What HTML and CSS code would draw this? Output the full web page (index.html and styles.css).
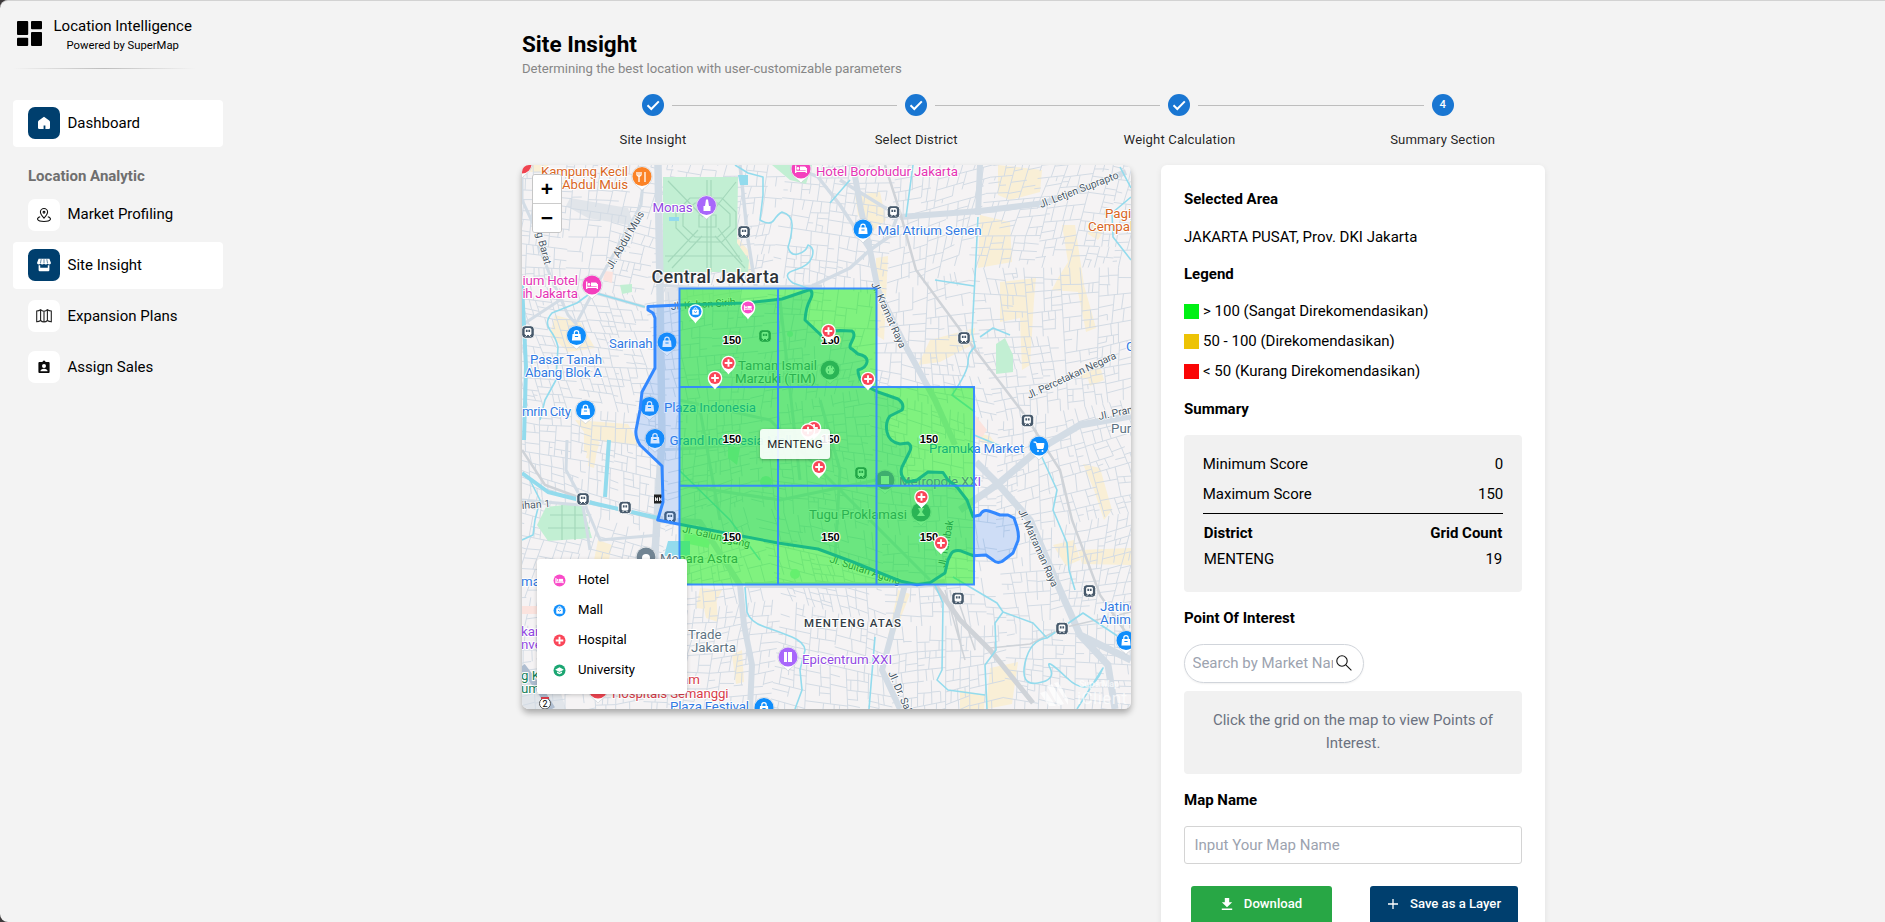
FILE: index.html
```html
<!DOCTYPE html>
<html lang="en">
<head>
<meta charset="utf-8">
<title>Location Intelligence</title>
<link rel="stylesheet" href="styles.css">
</head>
<body>
<div class="app">
  <aside class="sidebar">
    <div class="brand">
      <svg class="brand-logo" viewBox="0 0 25 25"><rect x="0" y="0" width="11.2" height="14" rx="1"/><rect x="14" y="0" width="11" height="8.2" rx="1"/><rect x="0" y="16.8" width="11.2" height="8.2" rx="1"/><rect x="14" y="11" width="11" height="14" rx="1"/></svg>
      <div class="brand-text"><div class="brand-name">Location Intelligence</div><div class="brand-sub">Powered by SuperMap</div></div>
    </div>
    <div class="divider"></div>
    <nav class="nav">
      <a class="nav-item active"><span class="nav-icon"><svg viewBox="0 0 16 16"><path fill="#fff" d="M8 1.8 13.2 5.600 Q14 6.200 14 7V12.800Q14 14 12.800 14H9.400V10.600H7.600V14H3.200Q2 14 2 12.800V7Q2 6.200 2.800 5.600Z"/></svg></span>Dashboard</a>
      <div class="nav-heading">Location Analytic</div>
      <a class="nav-item"><span class="nav-icon"><svg viewBox="0 0 16 16" fill="none" stroke="#111" stroke-width="1.1"><path d="M8 11.2C5.6 8.6 4.4 7 4.4 5.1A3.6 3.6 0 0 1 11.6 5.1C11.6 7 10.400 8.600 8 11.200Z"/><circle cx="8" cy="5.200" r=".9"/><path d="M4.200 9.800C-.2 11 .6 14.500 8 14.500S16.200 11 11.800 9.800"/></svg></span>Market Profiling</a>
      <a class="nav-item active"><span class="nav-icon"><svg viewBox="0 0 16 16" fill="#fff"><path d="M2.600 1.800H13.400L15 6Q14.800 7.400 13.400 7.400T11.600 6.400Q11 7.400 9.800 7.400T8 6.400Q7.400 7.400 6.200 7.400T4.400 6.400Q4 7.400 2.600 7.400T1 6Z"/><path d="M5.200 2.200 4.500 6M8 2.200V6M10.800 2.200 11.500 6" stroke="#003f6e" stroke-width=".6"/><path d="M2.600 8.200H4.200V10.800H11.800V8.200H13.400V13Q13.400 14.200 12.200 14.200H3.800Q2.600 14.200 2.600 13Z"/></svg></span>Site Insight</a>
      <a class="nav-item"><span class="nav-icon"><svg viewBox="0 0 16 16" fill="none" stroke="#222" stroke-width="1.1"><path d="M.7 3Q3 2.800 4.600 1.700Q6 3.200 8 3.200T11.400 1.700Q13 2.900 15.300 3V13.800Q13 13.600 11.400 12.500Q10 14 8 14T4.600 12.500Q3 13.700.7 13.800ZM4.600 1.700V12.500M8 3.200V14M11.400 1.700V12.500"/></svg></span>Expansion Plans</a>
      <a class="nav-item"><span class="nav-icon"><svg viewBox="0 0 16 16"><path fill="#0a0a0a" fill-rule="evenodd" d="M3.400 3H6.500A1.500 1.500 0 0 1 9.500 3H12.600Q13.600 3 13.600 4V13Q13.600 14 12.600 14H3.400Q2.400 14 2.400 13V4Q2.400 3 3.400 3ZM8 4.900A2 2 0 1 0 8 8.900A2 2 0 1 0 8 4.900ZM4.400 12.300H11.600Q11.400 9.800 8 9.800T4.400 12.300Z"/></svg></span>Assign Sales</a>
    </nav>
  </aside>

  <main class="main">
    <h1 class="title">Site Insight</h1>
    <p class="subtitle">Determining the best location with user-customizable parameters</p>
    <ol class="stepper">
      <li class="step"><span class="dot"><svg viewBox="0 0 22 22"><path d="M5.500 11.300 9.300 15 16.800 7.400"/></svg></span><span class="step-label">Site Insight</span></li>
      <li class="step"><span class="dot"><svg viewBox="0 0 22 22"><path d="M5.500 11.300 9.300 15 16.800 7.400"/></svg></span><span class="step-label">Select District</span></li>
      <li class="step"><span class="dot"><svg viewBox="0 0 22 22"><path d="M5.500 11.300 9.300 15 16.800 7.400"/></svg></span><span class="step-label">Weight Calculation</span></li>
      <li class="step"><span class="dot">4</span><span class="step-label">Summary Section</span></li>
    </ol>

    <div class="content">
      <section class="map">
        <svg class="map-canvas" id="map" viewBox="522 165 609 544">
          <defs>
            <g id="bag"><path d="M0 13.800C-2 10.800-10.200 7.800-10.200 0A10.200 10.200 0 0 1 10.200 0C10.200 7.800 2 10.800 0 13.800Z" fill="#fff" stroke="#b9c0c8" stroke-width=".5"/><circle r="9.500" fill="#0f8dfb"/><path d="M-4-1.500H4L4.600 5H-4.600Z" fill="#fff"/><path d="M-2.200-1V-2.600A2.200 2.200 0 0 1 2.200-2.600V-1" fill="none" stroke="#fff" stroke-width="1.200"/><path d="M-1.600 1H1.600" stroke="#0f8dfb"/></g>
            <g id="poi"><path d="M0 13.800C-2 10.800-10.200 7.800-10.200 0A10.200 10.200 0 0 1 10.200 0C10.200 7.800 2 10.800 0 13.800Z" fill="#fff" stroke="#b9c0c8" stroke-width=".5"/><circle r="9.500" fill="currentColor"/></g>
            <g id="bed"><use href="#poi"/><path d="M-5.300-3.500V4M-5.300 2.300H5.300V4M5.300 2V-1" stroke="#fff" stroke-width="1.300" fill="none"/><path d="M-1-2.500H3.600Q5.300-2.500 5.300-.8V1.300H-1Z" fill="#fff"/><circle cx="-3" cy="-.6" r="1.300" fill="#fff"/></g>
            <g id="station"><rect x="-6.300" y="-6.300" width="12.600" height="12.600" rx="3.500" fill="#47596b" stroke="#fff" stroke-width="1"/><rect x="-3.400" y="-4" width="6.800" height="7" rx="1.500" fill="#fff"/><path d="M-2.100-2.300H-.4V0H-2.100ZM.4-2.300H2.100V0H.4Z" fill="#47596b"/><path d="M-2.500 4.600-1 3M2.500 4.600 1 3" stroke="#fff"/></g>
            <g id="hosp"><path d="M0 11.500C-1.500 8.500-7.300 6-7.300 0A7.300 7.300 0 0 1 7.300 0C7.300 6 1.500 8.500 0 11.500Z" fill="#fff"/><circle r="6" fill="#fa4659"/><path d="M0-3.800V3.800M-3.800 0H3.800" stroke="#fff" stroke-width="1.900"/></g>
          </defs>
          <rect x="522" y="165" width="609" height="544" fill="#f5f3f4"/>
          <g fill="#f9efd6">
            <path d="M855 195 880 192 886 220 872 232 858 215ZM998 165 1042 170 1040 192 1010 200 998 195ZM980 215 1010 222 1012 262 978 268ZM1062 225 1075 225 1084 285 1096 328 1086 332 1078 292 1052 290 1058 278 1068 262ZM1000 282 1036 278 1034 300 1030 365 1022 370 1020 318 1000 322ZM930 340 975 328 972 345 940 362 918 365ZM876 258 888 256 884 340 876 335ZM555 315 580 322 595 348 568 352 550 335ZM575 420 628 424 640 445 590 440ZM590 435 598 445 594 468 588 466ZM1083 464 1100 468 1112 510 1104 520 1094 490ZM1053 545 1074 540 1080 560 1066 566ZM1078 550 1131 548 1131 565 1082 564ZM700 588 722 590 712 610 696 608ZM732 655 742 650 744 682 736 684ZM990 668 1018 662 1012 704 986 709ZM598 540 612 545 608 565 594 560ZM898 590 910 594 890 645 884 655ZM960 690 985 695 984 709 960 709ZM1080 370 1096 372 1092 380 1080 378ZM736 236 748 250 752 280 741 268ZM532 165 548 165 545 172 530 172ZM590 440 600 442 594 460 586 458ZM584 430 600 432 596 455 584 452ZM700 590 716 592 718 622 706 618ZM974 432 990 436 1000 450 984 446ZM1090 222 1104 230 1098 240 1088 234ZM1086 372 1100 366 1104 380 1090 386Z"/>
          </g>
          <g fill="#e1e5ea"><path d="M570 198 628 208 634 226 588 218 566 206ZM665 288 740 288 740 304 665 306ZM522 668 560 690 566 709 522 709Z"/></g>
          <g id="streets" fill="none" stroke="#d3dbe4" stroke-width="1"></g>
          <g fill="#c2efd3">
            <path d="M663 177H738L737 243 749 260 748 272H663ZM996 344 1005 338 1013 355 1013 372 996 374ZM546 507 582 503 592 538 548 541 537 525ZM772 165H812L806 184 790 180ZM620 285 632 284 632 292 622 294ZM685 532 712 538 708 548 684 543ZM728 446 740 448 737 465 728 458Z"/>
            <circle cx="766" cy="482" r="6"/><circle cx="795" cy="574" r="5"/><circle cx="790" cy="334" r="3"/>
          </g>
          <g fill="none" stroke="#a4d8bb" stroke-width="1.200">
            <path d="M668 181 703 217M668 262 698 230M736 182 716 207M718 228 742 262M707 180V270M711 180V270M690 198H722L736 212V228L722 242H690L676 228V212ZM695 203H718L730 214V226L718 237H695L683 226V214ZM699 215H716V227H699ZM665 256H740M672 268 702 236M745 268 715 236M550 515H590M548 528H590M562 505V540M575 504V540"/>
          </g>
          <g fill="#fbe3de"><path d="M605 271 613 272 612 283 603 280ZM975 415 987 430 980 440 974 438ZM522 606 545 606 545 614 522 614Z"/></g>
          <g fill="none" stroke="#d3dce5" stroke-linejoin="round">
            <path stroke-width="7.500" d="M658 165 660 288 662 440 657 520 654 570"/>
            <path stroke-width="3" d="M643 182 641 205 606 268 577 322M538 245 550 275 568 315 577 325M522 325 560 300M567 440 566 470 582 500 590 550M522 165V200L536 230M657 285 700 288 822 286M592 292 645 307"/>
            <path stroke-width="6" d="M853 165 861 210 870 250 878 290 905 345 935 400 955 445M900 217 980 211 1045 203 1126 172M980 165 978 215"/>
            <path stroke-width="3.500" d="M812 286 850 268 870 250 890 236 897 217M790 165 818 177 840 205 868 248M740 165 748 240 756 290M840 180 900 217"/>
            <path stroke-width="7" d="M976 462 998 484 1030 520 1060 590 1080 635 1108 665 1115 709M960 510 998 484 1038 450 1080 425 1131 416M1080 635 1131 660"/>
            <path stroke-width="6" d="M657 520 700 522 740 585 744 625 752 665 750 709M905 585 890 640 882 670 900 709M745 585 920 585 945 582"/>
            <path stroke-width="3" d="M657 450 700 448 780 440M679 400 770 420 850 500 930 580M679 485 780 500 876 480M780 300 790 390 800 480M700 410 720 520M820 400 840 470 835 560M585 505 600 540 660 535M522 500 580 505"/>
          </g>
          <path d="M522 666 540 690 552 709" fill="none" stroke="#aebdd0" stroke-width="7"/>
          <g fill="none" stroke="#cfd3d8"><path stroke-width="2.500" d="M885 165 900 212 916 270 964 335 1027 418 1060 470 1072 520 1100 595 1131 640M522 450 545 485 600 505 660 520"/><path stroke-width="5" d="M935 585 960 620 990 650 1033 703"/><path stroke-width="1.500" d="M990 648 1030 644 1062 628 1131 612M945 590 965 660M950 590 962 650M958 600 975 650"/></g>
          <g fill="none" stroke="#93dbed" stroke-width="1.600" stroke-linejoin="round">
            <path d="M735 165 748 173 763 177 763 195 760 220Q770 226 774 220T782 212Q793 215 792 227T788 247Q790 256 798 254T808 245Q815 248 812 257T795 270 793 283L810 289"/>
            <path d="M913 165 906 217M978 217 975 277 972 333 975 347Q968 352 968 362T952 395L975 412M935 280 974 286M1120 167 1131 188M1131 197 1112 213 1113 237 1131 260M1010 335 993 328 980 337M850 180 830 203"/>
            <path d="M645 307 592 292 577 303 552 313Q544 322 550 330T558 347L556 380 545 400 540 420M530 480 540 500 535 520 533 535 522 540M679 470 730 520 760 560"/>
            <path d="M745 587 747 612Q750 622 765 627T792 637 805 650L800 670 802 690 795 709"/>
            <path d="M935 585 943 603 942 670 937 680 948 690 985 695M953 577 997 603 1003 612 1033 623 1047 638Q1030 640 1025 663T1038 683 1050 668 1067 678 1103 668L1077 709M1003 612 995 623 996 650 985 665 987 709M1040 453 1057 490 1053 510 1067 543 1069 570 1075 590M1047 638 1083 613 1131 645M974 435 1010 450M875 637 869 709"/>
            <path stroke-width="4" d="M522 285 526 367 524 440M609 440 605 497M522 473 548 492 588 502 658 518"/>
          </g>
          <path d="M668 541H690V556H664ZM738 175H748V185H740ZM669 217H679V221H669Z" fill="#93dbed"/>

          <g class="poi-label">
            <g fill="#d9661f"><text x="541" y="176" textLength="87">Kampung Kecil</text><text x="562" y="189" textLength="66">Abdul Muis</text><text x="1105" y="218">Pagi</text><text x="1088" y="231">Cempaka</text></g>
            <g fill="#9249e2"><text x="652.500" y="211.500" textLength="40">Monas</text><text x="899" y="486" textLength="82">Metropole XXI</text><text x="802" y="663.500" textLength="90">Epicentrum XXI</text><text x="521" y="636">kan</text><text x="521" y="649">nve</text></g>
            <g fill="#e534b4"><text x="816" y="176" textLength="142">Hotel Borobudur Jakarta</text><text x="522.500" y="285" textLength="55.500">ium Hotel</text><text x="522.500" y="298" textLength="55.500">ih Jakarta</text></g>
            <g fill="#317ae2"><text x="877.500" y="235" textLength="104">Mal Atrium Senen</text><text x="530" y="364" textLength="72">Pasar Tanah</text><text x="525" y="377" textLength="77">Abang Blok A</text><text x="609" y="348" textLength="43.500">Sarinah</text><text x="522" y="416" textLength="49">mrin City</text><text x="664" y="412" textLength="92">Plaza Indonesia</text><text x="669.500" y="445" textLength="122">Grand Indonesia Mall</text><text x="929" y="452.600" textLength="95">Pramuka Market</text><text x="670" y="711" textLength="79">Plaza Festival</text><text x="1100" y="611">Jatinegara</text><text x="1100" y="624">Animal</text><text x="1126" y="351">G</text><text x="521" y="586">ma</text></g>
            <g fill="#5d7383"><text x="738" y="370" textLength="79">Taman Ismail</text><text x="735" y="383" textLength="81">Marzuki (TIM)</text><text x="809" y="518.500" textLength="98">Tugu Proklamasi</text><text x="660" y="563" textLength="78">Menara Astra</text><text x="688" y="639">Trade</text><text x="691" y="652">Jakarta</text><text x="1111" y="433">Pur</text></g>
            <g fill="#d83d4a"><text x="700" y="684" text-anchor="end">am</text><text x="612" y="698" textLength="116.500">Hospitals Semanggi</text></g>
            <g fill="#16805a"><text x="521" y="680">g K</text><text x="521" y="693">um</text></g>
          </g>
          <g class="road-label">
            <text transform="translate(1041 208) rotate(-21)" textLength="84">Jl. Letjen Suprapto</text>
            <text transform="translate(1029 399) rotate(-25)" textLength="97">Jl. Percetakan Negara</text>
            <text transform="translate(1099 420) rotate(-12)">Jl. Pramuka</text>
            <text transform="translate(612 270) rotate(-60)" textLength="65">Jl. Abdul Muis</text>
            <text transform="translate(536 233) rotate(75)">g Barat</text>
            <text transform="translate(671 310) rotate(-4)" textLength="65">Jl. Kebon Sirih</text>
            <text transform="translate(871 284) rotate(66)" textLength="71">Jl. Kramat Raya</text>
            <text transform="translate(945 568) rotate(-80)" textLength="48">Jl. Tambak</text>
            <text transform="translate(682 532) rotate(13)" textLength="69">Jl. Galunggung</text>
            <text transform="translate(829 562) rotate(18)" textLength="74">Jl. Sultan Agung</text>
            <text transform="translate(1018 511) rotate(66)" textLength="84">Jl. Matraman Raya</text>
            <text transform="translate(888 673) rotate(66)">Jl. Dr. Saharjo</text>
            <text transform="translate(522 509) rotate(-4)">ihan 1</text>
          </g>
          <text class="city-label" x="651.500" y="282.700" textLength="127.500">Central Jakarta</text>
          <text class="area-label" x="804" y="626.500" textLength="97">MENTENG ATAS</text>

          <use href="#poi" x="642" y="176.500" color="#fb8226"/><path d="M639 172V182M645 172V182M637 172V175Q639 178 641 175V172" stroke="#fff" stroke-width="1.300" fill="none"/>
          <use href="#poi" x="706.500" y="205.500" color="#a867fb"/><path d="M706 199.500H708L709 206H710.500V211H703.500V206H705Z" fill="#fff"/>
          <use href="#bed" x="801" y="169" color="#f43fbd"/><use href="#bed" x="592" y="285" color="#f43fbd"/>
          <use href="#poi" x="522" y="164" color="#ef4450"/><use href="#poi" x="598" y="689" color="#ef4450"/>
          <use href="#bag" x="863" y="229"/><use href="#bag" x="576.500" y="335.500"/><use href="#bag" x="667" y="342"/><use href="#bag" x="585.500" y="410"/><use href="#bag" x="649.500" y="406.500"/><use href="#bag" x="655" y="438.500"/><use href="#bag" x="764" y="707.500"/><use href="#bag" x="1126" y="640.500"/>
          <use href="#poi" x="1039" y="446" color="#0f8dfb"/><path d="M1033.500 442H1036L1037.500 448.500H1043L1044 443.500H1036.500" fill="#fff" stroke="#fff"/><circle cx="1038" cy="451" r="1" fill="#fff"/><circle cx="1042.500" cy="451" r="1" fill="#fff"/>
          <use href="#poi" x="830" y="370" color="#5b7c8c"/><circle cx="830" cy="370" r="4.500" fill="#fff"/><path d="M828 368h1M831 367h1M833 370h1M828 372h1" stroke="#5b7c8c" stroke-width="1.500"/>
          <use href="#poi" x="885" y="480" color="#8a6cc9"/><rect x="881" y="476" width="8" height="8" fill="#fff"/>
          <use href="#poi" x="921" y="512" color="#5b7c8c"/><path d="M918 508H924L922 512 925 516H917L920 512Z" fill="#fff"/>
          <use href="#poi" x="646" y="557" color="#718493"/><circle cx="646" cy="558" r="4" fill="#fff"/>
          <use href="#poi" x="788" y="657" color="#a867fb"/><path d="M784 652H787V662H784ZM788 652H792V662H788Z" fill="#fff"/>
          <use href="#station" x="744" y="232"/><use href="#station" x="893.500" y="212"/><use href="#station" x="528" y="332"/><use href="#station" x="964" y="338"/><use href="#station" x="1027.500" y="420.500"/><use href="#station" x="583" y="499"/><use href="#station" x="625" y="507.500"/><use href="#station" x="670" y="517"/><use href="#station" x="958" y="598.500"/><use href="#station" x="1089.500" y="591"/><use href="#station" x="1062" y="628.500"/><use href="#station" x="765" y="336"/><use href="#station" x="861" y="473"/>
          <rect x="654" y="494.500" width="9" height="9" fill="#222"/><path d="M655.500 501V497.500L657.500 501V497.500M659.500 501V497.500L661.500 501V497.500" fill="none" stroke="#fff" stroke-width=".9"/>
          <circle cx="545" cy="703.500" r="5.500" fill="#fff" stroke="#555"/><path d="M541 698H549" stroke="#d83d4a" stroke-width="2"/><text x="542.500" y="707" font-size="9">2</text>

          <path fill="#3388ff" fill-opacity=".2" stroke="#3388ff" stroke-width="3" stroke-linejoin="round" d="M648 306.500 679 305 745 303 782 299 810 289.500Q814 293 810 300T805 320L823 337 832 331 840 330.500 852 331Q856 334 852 341T852 349L858 354Q868 356 867 362T858 370Q858 376 862 382L868 387 878 392 898 399Q905 404 902 410L890 416Q885 422 887 432T900 444L908 443Q913 446 909 453L902 467Q899 476 907 482L917 480 928 472 943 472.500 948 480 957 487 967 500 973 516.500 980 515Q983 509 989 511T1000 515L1008 515 1014 518 1017 527Q1020 538 1017 543L1013 553 1002 561.500Q997 564 993 560L986 555 973 555.700 960 550.700Q953 550 951 554L948 560 945 573 930 582.700 917 584.700 900 581 853 562 818 549 778 543 678 524 657.700 520 663 502 662 466 640 445Q635 437 636 430L640 410 642 392 655 368V318L653 313 648 310Z"/>
          <g fill="#00f000" fill-opacity=".48" stroke="#3388ff" stroke-opacity=".95" stroke-width="2">
            <path d="M679.500 288.500H778V387H679.500ZM778 288.500H876.500V387H778ZM679.500 387H778V485.700H679.500ZM778 387H876.500V485.700H778ZM876.500 387H974V485.700H876.500ZM679.500 485.700H778V584.500H679.500ZM778 485.700H876.500V584.500H778ZM876.500 485.700H974V584.500H876.500Z"/>
          </g>
          <g class="score"><text x="732" y="343.500">150</text><text x="830.500" y="343.500">150</text><text x="732" y="442.500">150</text><text x="830.500" y="442.500">150</text><text x="929" y="442.500">150</text><text x="732" y="540.700">150</text><text x="830.500" y="540.700">150</text><text x="929" y="540.700">150</text></g>
          <g transform="translate(695.500 311.500)"><path d="M0 12C-1.500 8.500-7.300 6-7.300 0A7.300 7.300 0 0 1 7.300 0C7.300 6 1.500 8.500 0 12Z" fill="#fff"/><circle r="6" fill="#1590fb"/><rect x="-3.300" y="-2" width="6.600" height="5.300" rx=".8" fill="#fff"/><path d="M-1.700-2A1.700 1.700 0 0 1 1.700-2" fill="none" stroke="#fff"/><path d="M-1.500 0Q0 2 1.500 0" stroke="#1590fb" fill="none" stroke-width=".9"/></g>
          <g transform="translate(748 307.500)"><path d="M0 12C-1.500 8.500-7.300 6-7.300 0A7.300 7.300 0 0 1 7.300 0C7.300 6 1.500 8.500 0 12Z" fill="#fff"/><circle r="6" fill="#f94bc8"/><path d="M-3.600-2.300V3M-3.600 1.700H3.600V3" stroke="#fff" fill="none"/><path d="M-.6-1.500H3.600V1H-.6Z" fill="#fff"/><circle cx="-2" cy="-.3" r="1" fill="#fff"/></g>
          <use href="#hosp" x="828.500" y="331"/><use href="#hosp" x="728.500" y="363"/><use href="#hosp" x="715" y="378"/><use href="#hosp" x="868" y="379"/><use href="#hosp" x="814" y="428"/><use href="#hosp" x="808" y="430.500"/><use href="#hosp" x="819" y="467"/><use href="#hosp" x="921.500" y="497"/><use href="#hosp" x="941" y="543"/>
          <g fill="#fff" fill-opacity=".7"><path d="M1040 693 1046 691 1056 706H1049ZM1047 686 1052 684 1064 704 1058 706ZM1054 683 1058 682 1068 699V705Z"/><text x="1079" y="687" font-size="9" font-weight="700" textLength="40">SuperMap</text><text x="1077" y="704" font-size="17" textLength="50">iClient</text></g>
        </svg>
        <div class="zoom"><button>+</button><button>−</button></div>
        <div class="tooltip">MENTENG</div>
        <ul class="map-legend">
          <li><svg viewBox="0 0 12 12"><circle cx="6" cy="6" r="5.500" fill="#f94bc8"/><path d="M2.700 3.700V8.500M2.700 7.500H9.300V8.500" stroke="#fff" fill="none"/><path d="M5.500 4.500H9.300V7H5.500Z" fill="#fff"/><circle cx="4.200" cy="5.600" r=".9" fill="#fff"/></svg>Hotel</li>
          <li><svg viewBox="0 0 12 12"><circle cx="6" cy="6" r="5.500" fill="#1590fb"/><rect x="3" y="4" width="6" height="5" rx=".7" fill="#fff"/><path d="M4.500 4A1.500 1.500 0 0 1 7.500 4" fill="none" stroke="#fff"/><path d="M4.600 5.700Q6 7.500 7.400 5.700" stroke="#1590fb" fill="none" stroke-width=".8"/></svg>Mall</li>
          <li><svg viewBox="0 0 12 12"><circle cx="6" cy="6" r="5.500" fill="#fa4659"/><path d="M6 2.500V9.500M2.500 6H9.500" stroke="#fff" stroke-width="1.700"/></svg>Hospital</li>
          <li><svg viewBox="0 0 12 12"><circle cx="6" cy="6" r="5.500" fill="#1ba672"/><path d="M2 5.200 6 3 10 5.200 6 7.300ZM3.700 6.900 6 8.100 8.300 6.900V8.200L6 9.400 3.700 8.200Z" fill="#fff"/></svg>University</li>
        </ul>
      </section>

      <section class="panel">
        <h2>Selected Area</h2>
        <p>JAKARTA PUSAT, Prov. DKI Jakarta</p>
        <h2>Legend</h2>
        <ul class="ranges">
          <li><i class="swatch green"></i>&gt; 100 (Sangat Direkomendasikan)</li>
          <li><i class="swatch yellow"></i>50 - 100 (Direkomendasikan)</li>
          <li><i class="swatch red"></i>&lt; 50 (Kurang Direkomendasikan)</li>
        </ul>
        <h2>Summary</h2>
        <div class="summary">
          <div class="row"><span>Minimum Score</span><span>0</span></div>
          <div class="row"><span>Maximum Score</span><span>150</span></div>
          <div class="counts">
            <div class="row head"><span>District</span><span>Grid Count</span></div>
            <div class="row"><span>MENTENG</span><span>19</span></div>
          </div>
        </div>
        <h2>Point Of Interest</h2>
        <div class="poi">
          <div class="search"><input type="text" placeholder="Search by Market Name"><svg viewBox="0 0 16 16" fill="none" stroke="#111" stroke-width="1.100"><circle cx="6" cy="6" r="5.200"/><path d="M9.800 9.800 15.400 15.400"/></svg></div>
          <div class="hint">Click the grid on the map to view Points of Interest.</div>
        </div>
        <h2>Map Name</h2>
        <input class="map-name" type="text" placeholder="Input Your Map Name">
        <div class="actions">
          <button class="btn download"><svg viewBox="0 0 12 14"><path fill="#fff" d="M3.800 1H8.200V5.200H11.200L6 10.200.8 5.200H3.800ZM.8 11.500H11.200V13H.8Z"/></svg>Download</button>
          <button class="btn save"><svg viewBox="0 0 12 14"><path d="M6 2V12M1 7H11" stroke="#fff" stroke-width="1.300"/></svg>Save as a Layer</button>
        </div>
      </section>
    </div>
  </main>
</div>
<script src="map.js"></script>
</body>
</html>
```
FILE: styles.css
```css
* { box-sizing: border-box; margin: 0; padding: 0; }
html { font-size: 15px; }
body { background: #3d3a3b; font-family: Roboto, "Liberation Sans", sans-serif; line-height: 1.5; color: #000; height: 922px; overflow: hidden; }
ul, ol { list-style: none; }
button, input { font: inherit; }
.app { display: flex; height: 922px; background: #f3f3f3; border-top: 1px solid #d2d2d2; border-radius: 8px 0 0 8px; overflow: hidden; }

.sidebar { width: 236px; flex: none; padding: 0 13px; }
.brand { display: flex; align-items: center; height: 67px; padding-left: 4px; }
.brand-logo { width: 25px; height: 25px; margin-top: -3px; }
.brand-text { margin: 0 0 0 11.500px; text-align: center; }
.brand-name { line-height: 22px; }
.brand-sub { font-size: 11.250px; line-height: 17px; }
.divider { width: 182px; height: 1px; background: linear-gradient(90deg, transparent, #bdbdbd, transparent); }
.nav { display: flex; flex-direction: column; gap: 3.750px; margin-top: 30.500px; }
.nav-item { display: flex; align-items: center; gap: 7.500px; height: 47px; padding-left: 15px; border-radius: 4px; }
.nav-item.active { background: #fff; }
.nav-icon { width: 32px; height: 32px; border-radius: 7px; background: #fff; display: grid; place-items: center; }
.nav-icon svg { width: 16px; height: 16px; }
.active .nav-icon { background: #003f6e; }
.nav-heading { padding: 15px 0 0 15px; height: 37px; font-weight: 700; line-height: 23px; color: #6f6f6f; }

.main { margin-left: 286px; width: 1053px; }
.title { padding-top: 26px; font-size: 22.500px; line-height: 34px; font-weight: 700; }
.subtitle { font-size: 13.125px; line-height: 16px; color: #868686; }
.stepper { display: flex; width: 1053px; margin: 17px 0 0 -.7px; }
.step { position: relative; flex: 1; display: flex; flex-direction: column; align-items: center; }
.step + .step::before { content: ""; position: absolute; top: 11px; left: calc(-50% + 19px); right: calc(50% + 19px); height: 1px; background: #bdbdbd; }
.dot { width: 22px; height: 22px; border-radius: 50%; background: #1976d2; color: #fff; font-size: 11.250px; font-weight: 500; line-height: 22px; text-align: center; }
.dot svg { display: block; fill: none; stroke: #fff; stroke-width: 2; }
.step-label { margin-top: 14px; font-size: 13.125px; line-height: 19px; letter-spacing: .14px; color: rgba(0, 0, 0, .87); }

.content { display: flex; gap: 30px; margin-top: 16px; align-items: flex-start; }
.map { position: relative; width: 609px; height: 544px; border-radius: 7px; box-shadow: 0 4px 6px rgba(0, 0, 0, .3); }
.map-canvas { display: block; width: 609px; height: 544px; border-radius: 7px; }
.poi-label { font-size: 13.300px; paint-order: stroke; stroke: #fff; stroke-width: 2px; stroke-linejoin: round; }
.road-label { font-size: 10.500px; fill: #4a5968; paint-order: stroke; stroke: #fff; stroke-width: 1.500px; }
.city-label { font-size: 18px; font-weight: 500; fill: #2e3338; paint-order: stroke; stroke: #fff; stroke-width: 2px; }
.area-label { font-size: 11.500px; font-weight: 500; fill: #333c45; paint-order: stroke; stroke: #fff; stroke-width: 2px; }
.score { font: 700 11px "Liberation Sans", sans-serif; text-anchor: middle; paint-order: stroke; stroke: #fff; stroke-width: 2px; stroke-linejoin: round; }
.zoom { position: absolute; left: 10px; top: 9px; width: 30px; border: 1px solid #c6c6c6; border-radius: 3px; overflow: hidden; }
.zoom button { display: block; width: 28px; height: 28px; border: 0; background: #fff; font: 700 21px/28px "Liberation Sans", sans-serif; color: #000; }
.zoom button + button { border-top: 1px solid #ccc; height: 29px; }
.tooltip { position: absolute; left: 238px; top: 264px; width: 70px; height: 30px; border-radius: 3px; background: rgba(255, 255, 255, .9); box-shadow: 0 1px 3px rgba(0, 0, 0, .3); font-size: 11.500px; line-height: 30px; text-align: center; color: #222; letter-spacing: .2px; }
.map-legend { position: absolute; left: 15px; top: 394px; width: 150px; height: 135px; padding: 6px 0 0 16px; border-radius: 3px; background: #fff; box-shadow: 0 1px 4px rgba(0, 0, 0, .2); font-size: 13.125px; }
.map-legend li { display: flex; align-items: center; gap: 12px; height: 30px; }
.map-legend svg { width: 13px; height: 13px; }

.panel { width: 384px; height: 800px; padding: 23px 23px 0; border-radius: 6px; background: #fff; box-shadow: 0 2px 6px rgba(0, 0, 0, .08); display: flex; flex-direction: column; gap: 15px; }
.panel > * { flex: none; }
.panel h2 { font-size: 15px; line-height: 22.500px; font-weight: 700; }
.ranges { display: flex; flex-direction: column; gap: 7.500px; margin-top: -.5px; }
.ranges li { display: flex; align-items: center; gap: 4px; height: 22.500px; }
.swatch { width: 15px; height: 15px; }
.green { background: #00f014; }
.yellow { background: #edc305; }
.red { background: #fa0505; }
.summary { height: 157px; margin-top: -.5px; padding: 18.750px; border-radius: 4px; background: #f1f1f1; display: flex; flex-direction: column; gap: 7.500px; }
.row { display: flex; justify-content: space-between; line-height: 22.500px; }
.counts { border-top: 1px solid #000; padding: 7.500px 1px 0; display: flex; flex-direction: column; gap: 3.500px; }
.head { font-weight: 700; }
.poi { display: flex; flex-direction: column; gap: 7.500px; margin-top: -.5px; }
.search { display: flex; align-items: center; gap: 3px; width: 180px; height: 39.500px; padding-left: 7.500px; border: 1px solid #d1d5db; border-radius: 20px; box-shadow: 0 1px 2px rgba(0, 0, 0, .06); }
.search input { width: 140.500px; border: 0; outline: 0; background: none; }
.search svg { width: 16px; height: 16px; }
input::placeholder { color: #9ca3af; opacity: 1; }
.hint { height: 83px; padding: 18.750px; border-radius: 4px; background: #f1f1f1; color: #6b7280; text-align: center; line-height: 22.500px; }
.map-name { height: 38px; margin-top: -.5px; padding: 0 9.500px; border: 1px solid #d4d4d4; border-radius: 3px; background: #fff; }
.actions { display: flex; justify-content: space-between; margin-top: 7px; padding: 0 4px 0 7px; }
.btn { display: flex; align-items: center; justify-content: center; height: 38px; border: 0; border-radius: 3px; color: #fff; font-size: 13.125px; font-weight: 500; padding-bottom: 2px; }
.btn svg { width: 12px; height: 14px; margin-right: 11px; }
.download { width: 141px; background: #28a745; }
.save { width: 148px; background: #003f6e; }
```
FILE: map.js
```js
// Fills the map with a network of local streets by splitting blocks repeatedly.
(function () {
  var seed = 41;
  function rnd() { seed = (seed * 16807) % 2147483647; return seed / 2147483647; }
  function mix(a, b, t) { return [a[0] + (b[0] - a[0]) * t, a[1] + (b[1] - a[1]) * t]; }
  function dist(a, b) { return Math.hypot(a[0] - b[0], a[1] - b[1]); }
  var d = '';
  function line(a, b) {
    d += 'M' + a[0].toFixed(1) + ' ' + a[1].toFixed(1) + 'L' + b[0].toFixed(1) + ' ' + b[1].toFixed(1);
  }
  function split(a, b, c, e) {
    var w = (dist(a, b) + dist(e, c)) / 2, h = (dist(b, c) + dist(a, e)) / 2;
    if (Math.max(w, h) < 9 + rnd() * 14) return;
    if (Math.min(w, h) < 4) return;
    var t = 0.35 + rnd() * 0.3, u = t + (rnd() - 0.5) * 0.14, p, q;
    if (w > h) {
      p = mix(a, b, t); q = mix(e, c, u);
      line(p, rnd() < 0.2 ? mix(p, q, 0.6) : q);
      split(a, p, q, e); split(p, b, c, q);
    } else {
      p = mix(a, e, t); q = mix(b, c, u);
      line(p, rnd() < 0.2 ? mix(p, q, 0.6) : q);
      split(a, b, q, p); split(p, q, c, e);
    }
  }
  var xs = [500, 658, 770, 875, 985, 1150], ys = [140, 285, 400, 515, 610, 740];
  var pts = ys.map(function (y) {
    return xs.map(function (x) { return [x + (rnd() - 0.5) * 50, y + (rnd() - 0.5) * 50]; });
  });
  for (var i = 0; i < 5; i++) {
    for (var j = 0; j < 5; j++) split(pts[i][j], pts[i][j + 1], pts[i + 1][j + 1], pts[i + 1][j]);
  }
  var path = document.createElementNS('http://www.w3.org/2000/svg', 'path');
  path.setAttribute('d', d);
  document.getElementById('streets').appendChild(path);
})();
```
